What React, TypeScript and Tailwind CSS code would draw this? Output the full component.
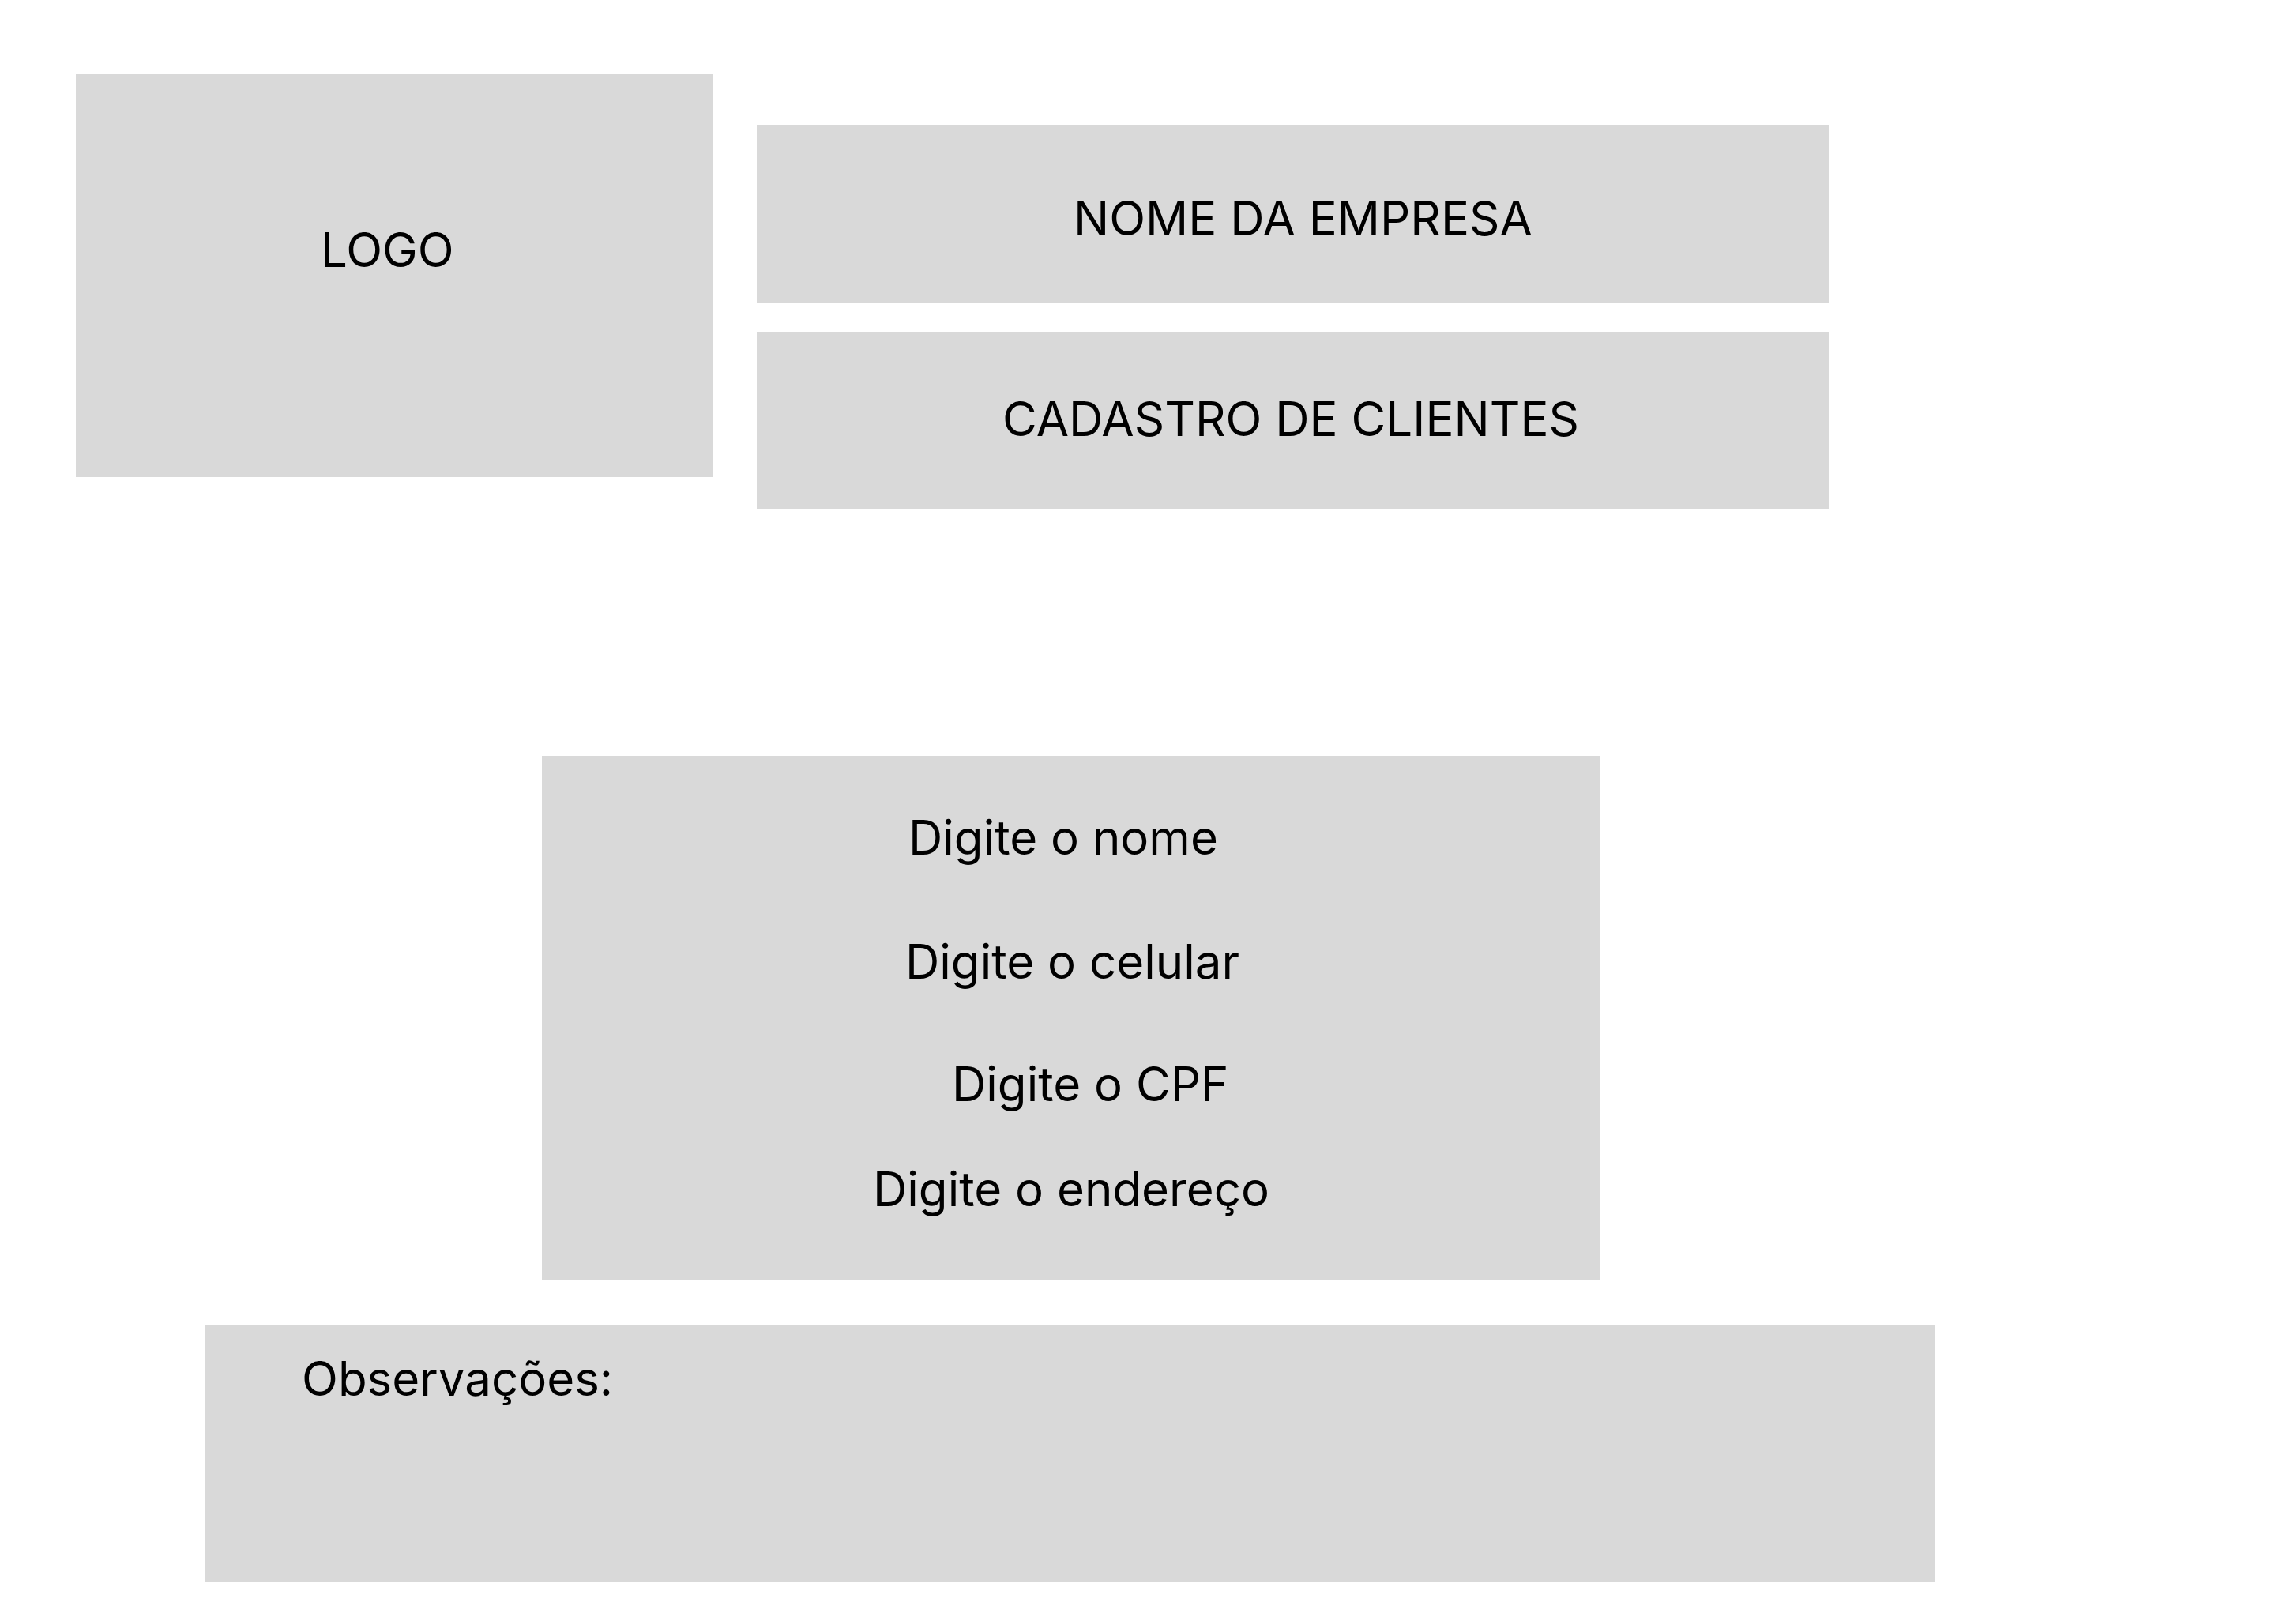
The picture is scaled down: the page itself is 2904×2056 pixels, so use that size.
export default function App() {
  return (
    <div className="w-[2904px] h-[2056px] bg-white text-black font-['Inter',sans-serif] text-[60px] leading-none">
      <div className="flex pt-[94px] pl-[96px]">
        <div className="w-[806px] h-[510px] bg-[#d9d9d9] pt-[192px] pl-[310px]">LOGO</div>
        <div className="flex flex-col ml-[56px] mt-[64px] gap-[37px]">
          <div className="w-[1357px] h-[225px] bg-[#d9d9d9] pt-[88px] pl-[401px]">NOME DA EMPRESA</div>
          <div className="w-[1357px] h-[225px] bg-[#d9d9d9] pt-[80px] pl-[311px]">CADASTRO DE CLIENTES</div>
        </div>
      </div>
      <div className="ml-[686px] mt-[312px] w-[1339px] h-[664px] bg-[#d9d9d9] flex flex-col">
        <div className="mt-[73px] pl-[464px]">Digite o nome</div>
        <div className="mt-[97px] pl-[460px]">Digite o celular</div>
        <div className="mt-[95px] pl-[519px]">Digite o CPF</div>
        <div className="mt-[73px] pl-[419px]">Digite o endereço</div>
      </div>
      <div className="ml-[260px] mt-[56px] w-[2190px] h-[326px] bg-[#d9d9d9] pt-[38px] pl-[122px]">Observações:</div>
    </div>
  );
}
